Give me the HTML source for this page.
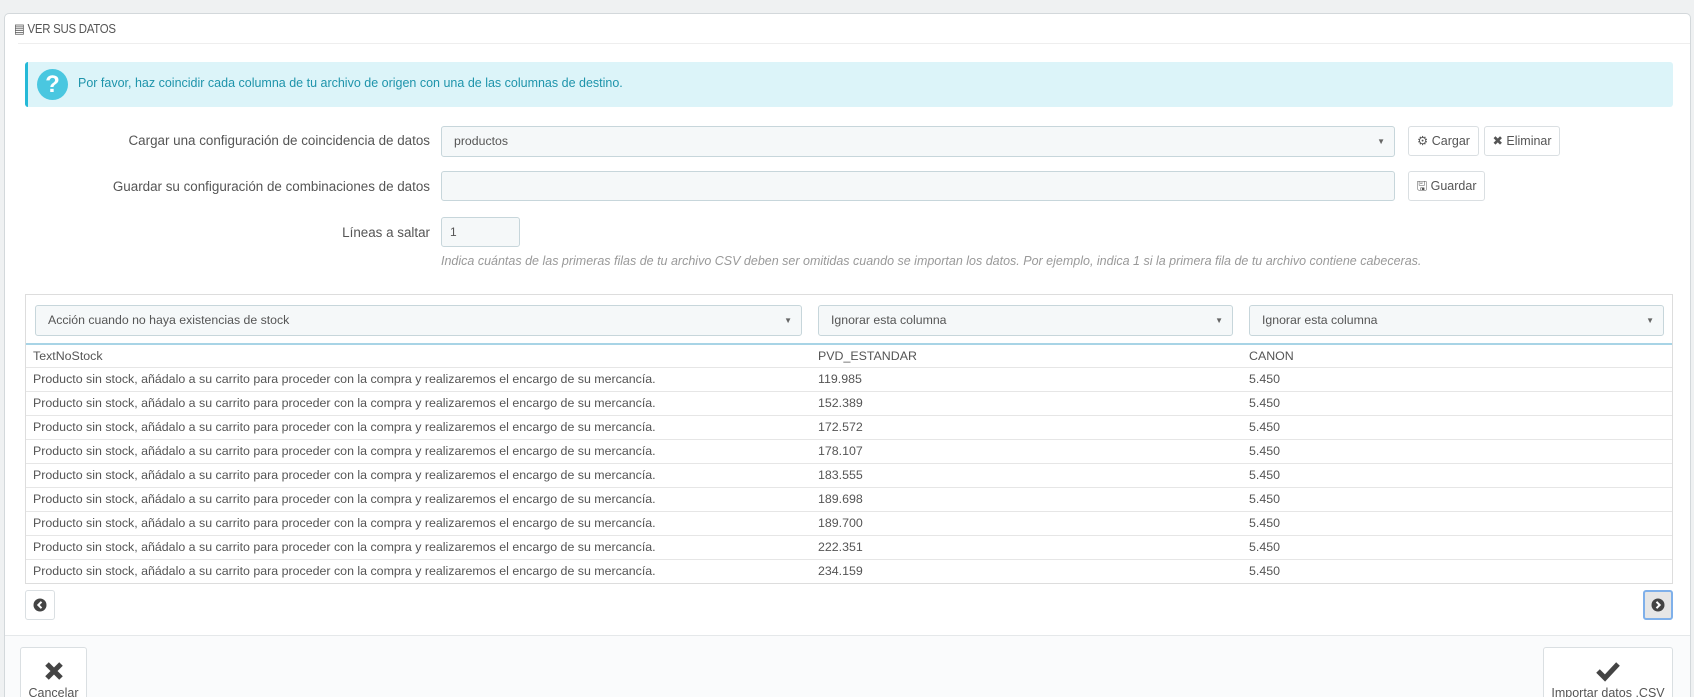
<!DOCTYPE html>
<html><head><meta charset="utf-8"><style>
*{box-sizing:border-box;margin:0;padding:0}
html,body{width:1694px;height:697px;overflow:hidden}
body{background:#eff1f2;font-family:"Liberation Sans",sans-serif;font-size:12px;color:#555;position:relative}
.abs{position:absolute}
.panel{left:4px;top:13px;width:1687px;height:684px;background:#fff;border:1px solid #d3d8db;border-bottom:none;border-radius:5px 5px 0 0;overflow:hidden}
.hdr{left:14px;top:21px;font-size:13px;color:#555;letter-spacing:-0.3px;transform:scaleX(.88);transform-origin:left}
.hline{left:18px;top:43px;width:1672px;height:1px;background:#eee}
.alert{left:25px;top:62px;width:1648px;height:45px;background:#dcf4f9;border-left:3px solid #25b9d7;border-radius:3px}
.alert .ic{position:absolute;left:9px;top:7px;width:31px;height:31px;border-radius:50%;background:#4ac7e0;color:#fff;font-weight:bold;font-size:24px;text-align:center;line-height:31px}
.alert .t{position:absolute;left:50px;top:14px;color:#1e94ab;font-size:12.5px}
.lbl{font-size:13.4px;color:#555;text-align:right;width:420px;left:10px}
.inp{background:#f5f8f9;border:1px solid #c7d6db;border-radius:3px}
.sel{background:#f5f8f9;border:1px solid #c7d6db;border-radius:3px;font-size:12.3px;color:#555;padding-left:12px;line-height:29px}
.sel:after{content:"▼";position:absolute;right:9px;top:0;font-size:8px;color:#666}
.btn{background:#fff;border:1px solid #dadfe2;border-radius:3px;font-size:12.5px;color:#555;text-align:center;line-height:28px}
.tbl{left:25px;top:294px;width:1648px;height:290px;border:1px solid #ddd}
.row{position:absolute;left:0;width:1646px;height:24px;border-top:1px solid #e6e6e6;font-size:12.4px;color:#555;line-height:23px}
.row span{position:absolute}
.help{left:441px;top:254px;font-style:italic;color:#999;font-size:12.5px}
.foot{left:5px;top:635px;width:1685px;height:70px;background:#fafbfc;border-top:1px solid #e5e8ea}
.nav{display:flex;align-items:center;justify-content:center;padding:0}
</style></head><body>
<div class="abs panel"></div>
<div class="abs hdr">&#9636; VER SUS DATOS</div>
<div class="abs hline"></div>
<div class="abs alert"><div class="ic">?</div><div class="t">Por favor, haz coincidir cada columna de tu archivo de origen con una de las columnas de destino.</div></div>

<div class="abs lbl" style="top:133px">Cargar una configuración de coincidencia de datos</div>
<div class="abs sel" style="left:441px;top:126px;width:954px;height:31px">productos</div>
<div class="abs btn" style="left:1408px;top:126px;width:71px;height:30px">⚙ Cargar</div>
<div class="abs btn" style="left:1484px;top:126px;width:76px;height:30px">✖ Eliminar</div>

<div class="abs lbl" style="top:179px">Guardar su configuración de combinaciones de datos</div>
<div class="abs inp" style="left:441px;top:171px;width:954px;height:30px"></div>
<div class="abs btn" style="left:1408px;top:171px;width:77px;height:30px">🖫 Guardar</div>

<div class="abs lbl" style="top:225px">Líneas a saltar</div>
<div class="abs inp" style="left:441px;top:217px;width:79px;height:30px;padding-left:8px;line-height:28px;font-size:12px">1</div>
<div class="abs help">Indica cuántas de las primeras filas de tu archivo CSV deben ser omitidas cuando se importan los datos. Por ejemplo, indica 1 si la primera fila de tu archivo contiene cabeceras.</div>

<div class="abs tbl">
<div class="abs sel" style="left:9px;top:10px;width:767px;height:31px">Acción cuando no haya existencias de stock</div>
<div class="abs sel" style="left:792px;top:10px;width:415px;height:31px">Ignorar esta columna</div>
<div class="abs sel" style="left:1223px;top:10px;width:415px;height:31px">Ignorar esta columna</div>
<div class="row" style="top:48px;border-top:2px solid #a8d4e6"><span style="left:7px">TextNoStock</span><span style="left:792px">PVD_ESTANDAR</span><span style="left:1223px">CANON</span></div>
<div class="row" style="top:72px"><span style="left:7px">Producto sin stock, añádalo a su carrito para proceder con la compra y realizaremos el encargo de su mercancía.</span><span style="left:792px">119.985</span><span style="left:1223px">5.450</span></div>
<div class="row" style="top:96px"><span style="left:7px">Producto sin stock, añádalo a su carrito para proceder con la compra y realizaremos el encargo de su mercancía.</span><span style="left:792px">152.389</span><span style="left:1223px">5.450</span></div>
<div class="row" style="top:120px"><span style="left:7px">Producto sin stock, añádalo a su carrito para proceder con la compra y realizaremos el encargo de su mercancía.</span><span style="left:792px">172.572</span><span style="left:1223px">5.450</span></div>
<div class="row" style="top:144px"><span style="left:7px">Producto sin stock, añádalo a su carrito para proceder con la compra y realizaremos el encargo de su mercancía.</span><span style="left:792px">178.107</span><span style="left:1223px">5.450</span></div>
<div class="row" style="top:168px"><span style="left:7px">Producto sin stock, añádalo a su carrito para proceder con la compra y realizaremos el encargo de su mercancía.</span><span style="left:792px">183.555</span><span style="left:1223px">5.450</span></div>
<div class="row" style="top:192px"><span style="left:7px">Producto sin stock, añádalo a su carrito para proceder con la compra y realizaremos el encargo de su mercancía.</span><span style="left:792px">189.698</span><span style="left:1223px">5.450</span></div>
<div class="row" style="top:216px"><span style="left:7px">Producto sin stock, añádalo a su carrito para proceder con la compra y realizaremos el encargo de su mercancía.</span><span style="left:792px">189.700</span><span style="left:1223px">5.450</span></div>
<div class="row" style="top:240px"><span style="left:7px">Producto sin stock, añádalo a su carrito para proceder con la compra y realizaremos el encargo de su mercancía.</span><span style="left:792px">222.351</span><span style="left:1223px">5.450</span></div>
<div class="row" style="top:264px"><span style="left:7px">Producto sin stock, añádalo a su carrito para proceder con la compra y realizaremos el encargo de su mercancía.</span><span style="left:792px">234.159</span><span style="left:1223px">5.450</span></div>
</div>

<div class="abs btn nav" style="left:25px;top:590px;width:30px;height:30px"><svg width="14" height="14" viewBox="0 0 14 14"><circle cx="7" cy="7" r="6.5" fill="#444"/><path d="M8.5 3.8L5.3 7l3.2 3.2" stroke="#fff" stroke-width="2" fill="none"/></svg></div>
<div class="abs btn nav" style="left:1643px;top:590px;width:30px;height:30px;background:#e6e6e6;border:2px solid #7fb0ea"><svg width="14" height="14" viewBox="0 0 14 14"><circle cx="7" cy="7" r="6.5" fill="#444"/><path d="M5.5 3.8L8.7 7l-3.2 3.2" stroke="#fff" stroke-width="2" fill="none"/></svg></div>

<div class="abs foot"></div>
<div class="abs btn" style="left:20px;top:647px;width:67px;height:60px;line-height:normal">
<svg width="22" height="22" viewBox="0 0 22 22" style="margin-top:12px"><path d="M4 4L18 18M18 4L4 18" stroke="#444" stroke-width="5"/></svg>
<div style="font-size:12.5px;margin-top:1px">Cancelar</div></div>
<div class="abs btn" style="left:1543px;top:647px;width:130px;height:60px;line-height:normal">
<svg width="26" height="22" viewBox="0 0 26 22" style="margin-top:12px"><path d="M3 11l7 7L23 4" stroke="#444" stroke-width="5" fill="none"/></svg>
<div style="font-size:12.5px;margin-top:1px">Importar datos .CSV</div></div>
</body></html>
